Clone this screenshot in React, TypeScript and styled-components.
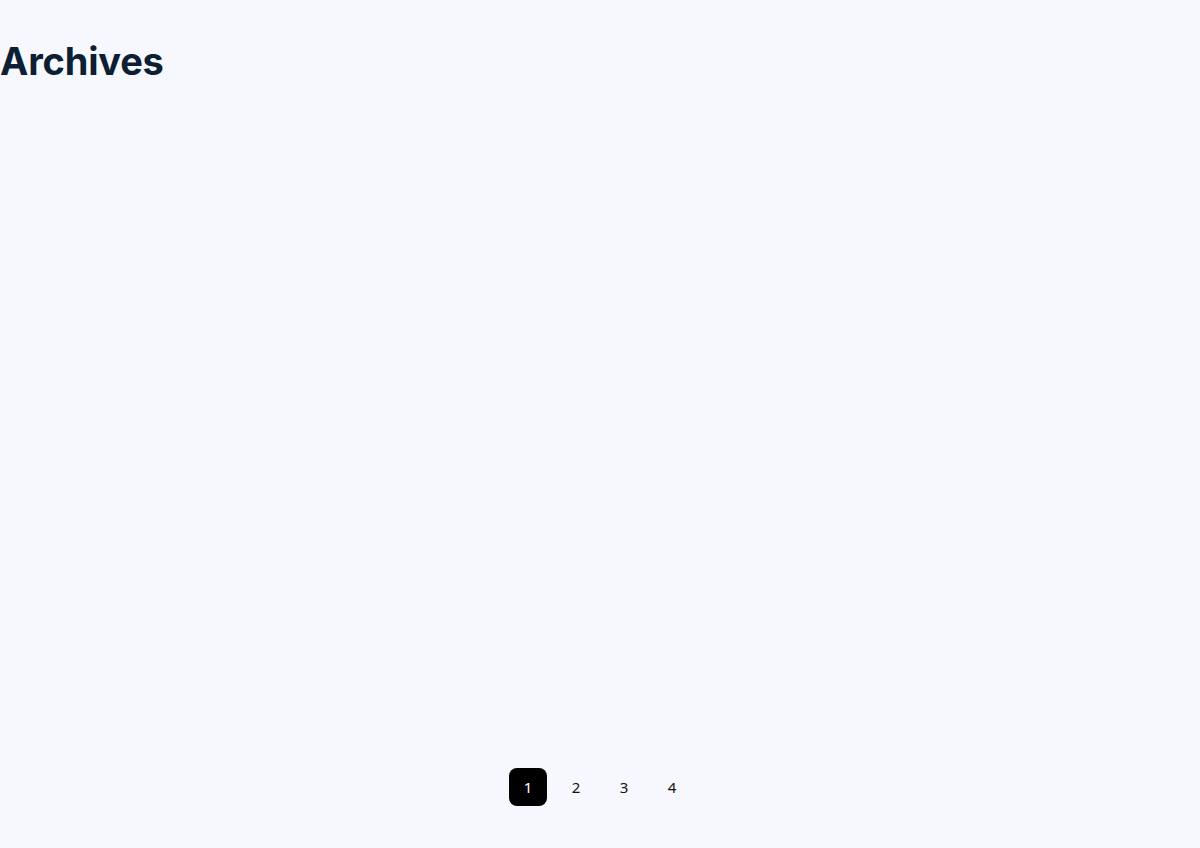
import React from "react"
import styled, { createGlobalStyle } from "styled-components"

const GlobalStyle = createGlobalStyle`
	html, body {
		margin: 0;
		padding: 0;
		background-color: #f7f8fd;
	}
	body {
		font-family: "Noto Sans", "Open Sans", sans-serif;
	}
`

const SPage = styled.div`
	display: flex;
	flex-direction: column;
	width: 100%;
	min-height: 848px;
	box-sizing: border-box;
	padding: 38px 0 42px 0;
`

const STitle = styled.h1`
	margin: 0;
	font-family: Inter, "Liberation Sans", sans-serif;
	font-size: 38px;
	font-weight: 700;
	line-height: 46px;
	color: #0c1f33;
	letter-spacing: -0.2px;
`

const SList = styled.div`
	flex: 1;
`

const SPagination = styled.nav`
	display: flex;
	justify-content: center;
	gap: 10px;
`

const SPageButton = styled.button<{ $active?: boolean }>`
	display: flex;
	width: 38px;
	height: 38px;
	align-items: center;
	justify-content: center;
	border: none;
	border-radius: 8px;
	padding: 0;
	font-family: "Noto Sans", sans-serif;
	font-size: 15px;
	cursor: pointer;
	color: ${({ $active }) => ($active ? "#ffffff" : "#111111")};
	background-color: ${({ $active }) => ($active ? "#000000" : "transparent")};
`

export default function App() {
	const pages = [1, 2, 3, 4]
	return (
		<>
			<GlobalStyle />
			<SPage>
				<STitle>Archives</STitle>
				<SList />
				<SPagination>
					{pages.map((p) => (
						<SPageButton key={p} $active={p === 1}>
							{p}
						</SPageButton>
					))}
				</SPagination>
			</SPage>
		</>
	)
}
